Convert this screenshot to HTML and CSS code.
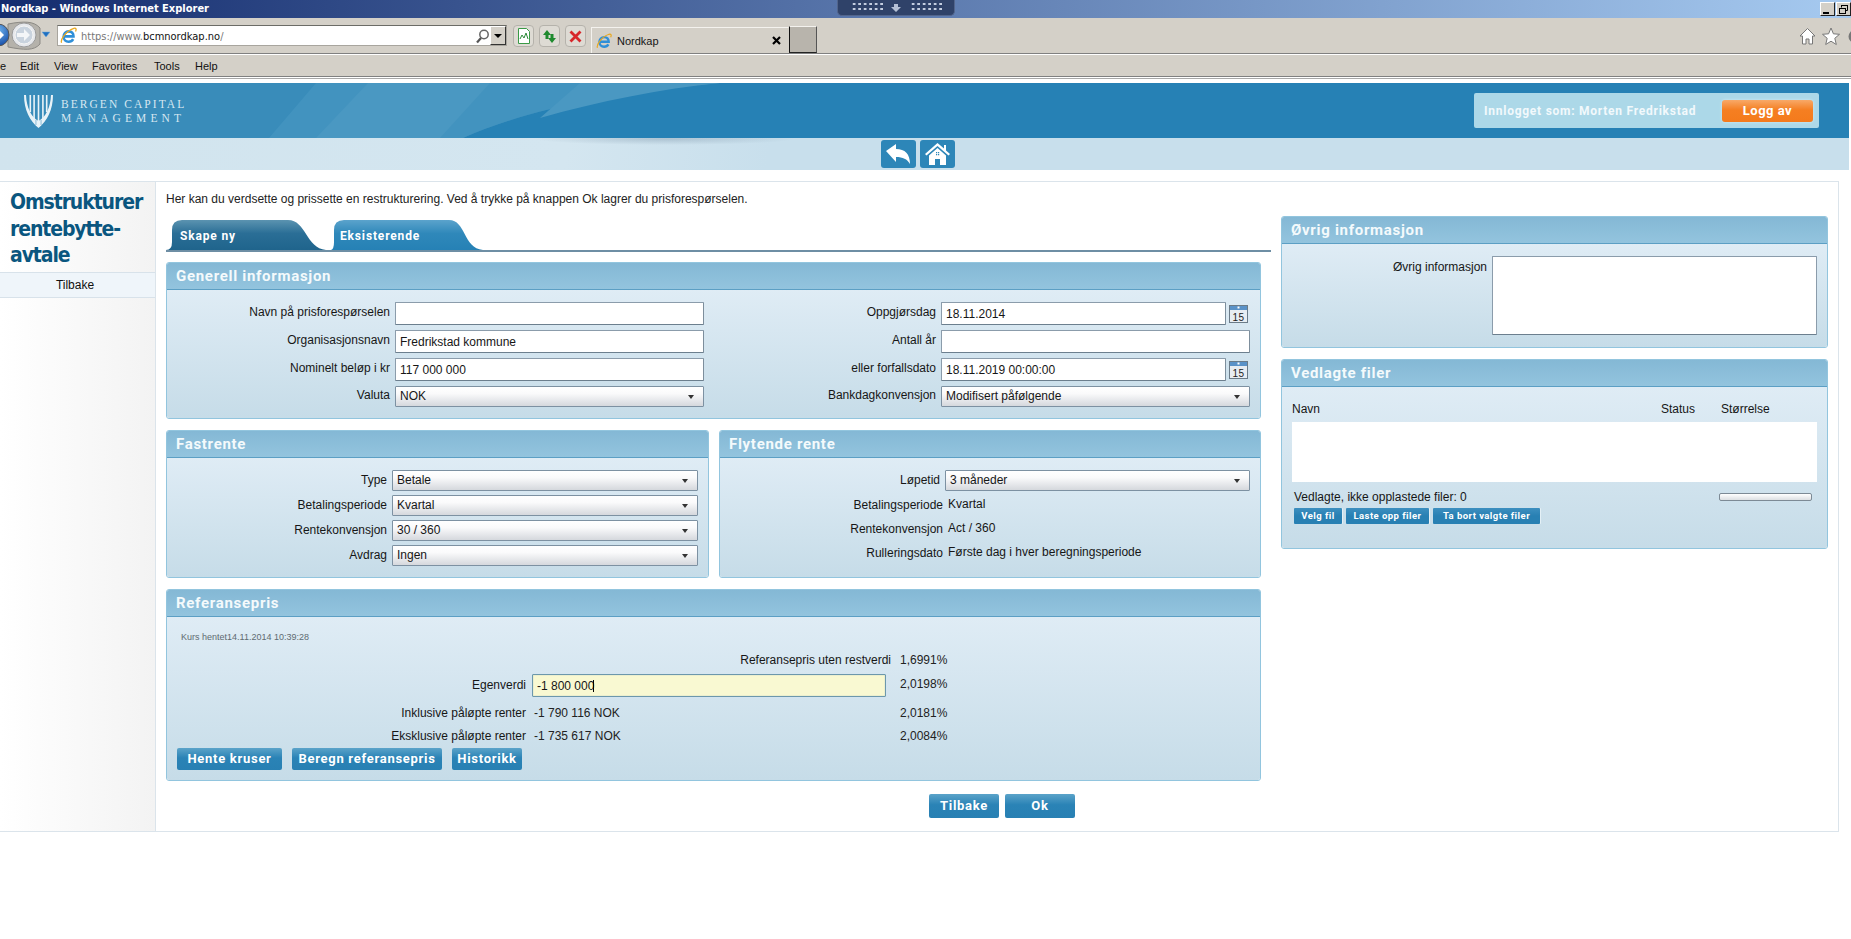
FILE: index.html
```html
<!DOCTYPE html>
<html lang="no">
<head>
<meta charset="utf-8">
<title>Nordkap</title>
<link rel="stylesheet" href="styles.css">
</head>
<body>
<svg class="defs" width="0" height="0">
  <symbol id="ie" viewBox="0 0 16 16">
    <path d="M3.400 8.800h9.300c0-2.800-1.800-4.700-4.400-4.700-2.900 0-4.900 2.200-4.900 5 0 2.800 2 4.700 4.700 4.700 2 0 3.500-.9 4.300-2.400" fill="none" stroke="#2f8fd8" stroke-width="2.400"/>
    <path d="M1.500 14.800C.2 12.500 5 4 13 1.300c2.200-.6 2.700.8 1.600 3" fill="none" stroke="#e8a820" stroke-width="1.200"/>
  </symbol>
  <symbol id="cal" viewBox="0 0 19 18">
    <rect x=".5" y=".5" width="18" height="17" fill="#e8edf2" stroke="#6b7b88"/>
    <rect x="1" y="1" width="17" height="4" fill="#5a92c8"/>
    <rect x="8.500" y="1.500" width="2" height="2" fill="#fff"/>
  </symbol>
</svg>

<div class="titlebar">
  <span class="title-text">Nordkap - Windows Internet Explorer</span>
  <div class="pulldown">
    <span class="dots"></span>
    <svg width="10" height="8" viewBox="0 0 10 8"><path d="M3 0h4v3h3L5 8 0 3h3z" fill="#b4c0d6"/></svg>
    <span class="dots"></span>
  </div>
  <div class="win-btns">
    <span class="win-btn"><svg width="13" height="13" viewBox="0 0 13 13"><rect x="2" y="9" width="6" height="2" fill="#000"/></svg></span>
    <span class="win-btn"><svg width="13" height="13" viewBox="0 0 13 13"><path d="M4.500 2.500h6v5h-2M4.500 2.500v2" fill="none" stroke="#000"/><path d="M4 2h7v1H4z"/><rect x="2.500" y="5.500" width="6" height="5" fill="none" stroke="#000"/><path d="M2 5h7v1H2z"/></svg></span>
  </div>
</div>

<div class="toolbar">
  <svg class="nav-arrows" width="57" height="35" viewBox="0 0 57 35">
    <defs>
      <radialGradient id="bk" cx=".5" cy=".3" r=".8"><stop offset="0" stop-color="#6fb4ee"/><stop offset="1" stop-color="#0b3f9e"/></radialGradient>
    </defs>
    <path d="M8 6C24 3 34 3 40 10v16C34 33 24 32 8 29z" fill="#b5b2ab" stroke="#8c8a85"/>
    <circle cx="-2" cy="17" r="11" fill="url(#bk)" stroke="#555"/>
    <path d="M-1 12l5 5-5 5v-3h-6v-4h6z" fill="#fff"/>
    <circle cx="24" cy="17" r="12" fill="#e6e8ec" stroke="#9a9a9a"/>
    <circle cx="24" cy="17" r="9" fill="#c9d3de" stroke="#f5f5f5"/>
    <path d="M24 11l6 6-6 6v-4h-7v-4h7z" fill="#f4f6f8"/>
    <path d="M42 14h8l-4 5z" fill="#1f6fc0" stroke="#6ba8df" stroke-width=".5"/>
  </svg>
  <div class="address">
    <svg class="addr-ie" width="17" height="17"><use href="#ie"/></svg>
    <span class="url"><span class="url-dim">https://www.</span>bcmnordkap.no<span class="url-dim">/</span></span>
    <svg class="addr-search" width="15" height="16" viewBox="0 0 15 16"><circle cx="9" cy="6.500" r="4.200" fill="#fff" stroke="#666" stroke-width="1.500"/><path d="M6 10l-4 4.500" stroke="#555" stroke-width="2.200"/></svg>
    <span class="addr-drop"></span>
  </div>
  <span class="tool-btn tool-first"><svg width="14" height="16" viewBox="0 0 14 16"><path d="M1.500.5h8l3 3v12h-11z" fill="#fff" stroke="#3a9a46"/><path d="M3 11l2-4 2 3 2-5 2 6" fill="none" stroke="#2b8a38"/></svg></span>
  <span class="tool-btn"><svg width="15" height="15" viewBox="0 0 15 15"><path d="M5 1L1 6h2.500v4h3V6H9z" fill="#1f8a2e"/><path d="M10 14l4-5h-2.500V5h-3v4H6z" fill="#1f8a2e"/></svg></span>
  <span class="tool-btn"><svg width="13" height="13" viewBox="0 0 13 13"><path d="M1.500 1.500l10 10M11.500 1.500l-10 10" stroke="#d8262a" stroke-width="2.800"/></svg></span>
  <div class="ie-tab">
    <svg width="16" height="16"><use href="#ie"/></svg>
    <span class="ie-tab-label">Nordkap</span>
    <svg class="ie-tab-x" width="9" height="9" viewBox="0 0 9 9"><path d="M1 1l7 7M8 1L1 8" stroke="#000" stroke-width="2.200"/></svg>
  </div>
  <span class="new-tab"></span>
  <div class="tool-right">
    <svg width="17" height="19" viewBox="0 0 17 19"><path d="M8.500 1.500L1 9h2.500v8h3.500v-5h3v5h3.500V9H16z" fill="#fff" stroke="#777"/></svg>
    <svg width="18" height="19" viewBox="0 0 18 19"><path d="M9 1l2.400 5.800 6.100.5-4.700 4 1.500 6.200L9 14.200l-5.300 3.300 1.500-6.200-4.700-4 6.100-.5z" fill="#fff" stroke="#777"/></svg>
    <svg width="17" height="19" viewBox="0 0 17 19"><circle cx="9" cy="9.500" r="5" fill="#fff" stroke="#777" stroke-width="3"/></svg>
  </div>
</div>

<nav class="menubar">
  <span class="m-file">e</span><span class="m-edit">Edit</span><span class="m-view">View</span><span class="m-fav">Favorites</span><span class="m-tools">Tools</span><span class="m-help">Help</span>
</nav>
<div class="chrome-end"></div>

<header class="site-header">
  <svg class="header-art" width="1849" height="55" viewBox="0 0 1849 55">
    <path d="M0 0H720C600 10 520 30 463 55H0z" fill="#398cba"/>
    <path d="M316 0H720C600 10 520 30 463 55H269z" fill="#4293bf"/>
    <path d="M368 0H490L440 55H316z" fill="#4a98c2"/>
    <path d="M580 0H720C660 6 600 18 540 35z" fill="#4a98c2"/>
  </svg>
  <div class="logo">
    <svg width="29" height="33" viewBox="0 0 29 33">
      <path d="M0 0H2C2.500 12 7 22 14.500 26 22 22 26.500 12 27 0h2C29 15 23 26 14.500 33 6 26 0 15 0 0z" fill="#e9f3f8"/>
      <path d="M5.500 0h1.600v17H5.500zM9.300 0h1.600v24H9.300zM13.700 0h1.600v32h-1.600zM18.100 0h1.600v24h-1.600zM21.900 0h1.600v17h-1.600z" fill="#e9f3f8"/>
      <path d="M11.500 25h.9v5h-.9zM16.600 25h.9v5h-.9z" fill="#7fb4d2"/>
    </svg>
    <div class="logo-text"><span class="logo-l1">BERGEN CAPITAL</span><span class="logo-l2">MANAGEMENT</span></div>
  </div>
  <div class="login-box">
    <span class="login-text">Innlogget som: Morten Fredrikstad</span>
    <button class="logout" type="button">Logg av</button>
  </div>
</header>

<div class="subbar">
  <span class="nav-btn"><svg width="27" height="22" viewBox="0 0 27 22"><path d="M1 8L11 1v5c9 0 14 5 14 15-3-5-7-7-14-7v5z" fill="#fff"/></svg></span>
  <span class="nav-btn"><svg width="27" height="24" viewBox="0 0 27 24"><path d="M13.500 1L1 12l1.500 1.500L13.500 4l11 9.500L26 12l-4-3.500V3h-2v3.500z" fill="#fff"/><path d="M5 13.500L13.500 6l8.500 7.500V23h-6v-6h-5v6H5z" fill="#fff"/><path d="M12 10h1.200v1.200H12zM14 10h1.200v1.200H14zM12 12h1.200v1.200H12zM14 12h1.200v1.200H14z" fill="#2d86b8"/></svg></span>
</div>

<main class="main">
  <aside class="side">
    <h1 class="side-title">Omstrukturer<br>rentebytte-<br>avtale</h1>
    <a class="side-link">Tilbake</a>
  </aside>
  <section class="content">
    <p class="intro">Her kan du verdsette og prissette en restrukturering. Ved å trykke på knappen Ok lagrer du prisforespørselen.</p>
    <div class="columns">
      <div class="col-left">
        <div class="tabs">
          <span class="tab tab-new">Skape ny</span>
          <span class="tab tab-existing">Eksisterende</span>
        </div>

        <div class="panel panel-general">
          <h2 class="panel-head">Generell informasjon</h2>
          <div class="panel-body general-body">
            <div class="form form-a">
              <div class="row"><label>Navn på prisforespørselen</label><input class="field w309" type="text"></div>
              <div class="row"><label>Organisasjonsnavn</label><input class="field w309" type="text" value="Fredrikstad kommune"></div>
              <div class="row"><label>Nominelt beløp i kr</label><input class="field w309" type="text" value="117 000 000"></div>
              <div class="row row-sel"><label>Valuta</label><div class="select w309">NOK</div></div>
            </div>
            <div class="form form-b">
              <div class="row"><label>Oppgjørsdag</label><input class="field w285" type="text" value="18.11.2014"><svg class="cal" width="19" height="18" viewBox="0 0 19 18"><use href="#cal"/><text x="9.500" y="15.500" class="cal-num">15</text></svg></div>
              <div class="row"><label>Antall år</label><input class="field w309" type="text"></div>
              <div class="row"><label>eller forfallsdato</label><input class="field w285" type="text" value="18.11.2019 00:00:00"><svg class="cal" width="19" height="18" viewBox="0 0 19 18"><use href="#cal"/><text x="9.500" y="15.500" class="cal-num">15</text></svg></div>
              <div class="row row-sel"><label>Bankdagkonvensjon</label><div class="select w309">Modifisert påfølgende</div></div>
            </div>
          </div>
        </div>

        <div class="panel-pair">
          <div class="panel panel-fixed">
            <h2 class="panel-head">Fastrente</h2>
            <div class="panel-body rate-body">
              <div class="row row-sel"><label>Type</label><div class="select w306">Betale</div></div>
              <div class="row row-sel"><label>Betalingsperiode</label><div class="select w306">Kvartal</div></div>
              <div class="row row-sel"><label>Rentekonvensjon</label><div class="select w306">30 / 360</div></div>
              <div class="row row-sel"><label>Avdrag</label><div class="select w306">Ingen</div></div>
            </div>
          </div>
          <div class="panel panel-float">
            <h2 class="panel-head">Flytende rente</h2>
            <div class="panel-body rate-body float-body">
              <div class="row row-sel"><label>Løpetid</label><div class="select w305">3 måneder</div></div>
              <div class="row row-val"><label>Betalingsperiode</label><span class="value">Kvartal</span></div>
              <div class="row row-val"><label>Rentekonvensjon</label><span class="value">Act / 360</span></div>
              <div class="row row-val"><label>Rulleringsdato</label><span class="value">Første dag i hver beregningsperiode</span></div>
            </div>
          </div>
        </div>

        <div class="panel panel-ref">
          <h2 class="panel-head">Referansepris</h2>
          <div class="panel-body ref-body">
            <div class="kurs">Kurs hentet14.11.2014 10:39:28</div>
            <div class="ref-row ref-first"><label class="ref-wide">Referansepris uten restverdi</label><span class="pct pct-first">1,6991%</span></div>
            <div class="ref-row ref-input"><label>Egenverdi</label><div class="ref-mid caret-wrap"><input class="field field-hl" type="text" value="-1 800 000"><span class="caret"></span></div><span class="pct pct-up">2,0198%</span></div>
            <div class="ref-row ref-third"><label>Inklusive påløpte renter</label><span class="ref-mid ref-val">-1 790 116 NOK</span><span class="pct">2,0181%</span></div>
            <div class="ref-row ref-fourth"><label>Eksklusive påløpte renter</label><span class="ref-mid ref-val">-1 735 617 NOK</span><span class="pct">2,0084%</span></div>
            <div class="ref-btns">
              <button class="btn btn-hente" type="button">Hente kruser</button>
              <button class="btn btn-beregn" type="button">Beregn referansepris</button>
              <button class="btn btn-hist" type="button">Historikk</button>
            </div>
          </div>
        </div>

        <div class="actions">
          <button class="btn btn-action" type="button">Tilbake</button>
          <button class="btn btn-action" type="button">Ok</button>
        </div>
      </div>

      <div class="col-right">
        <div class="panel panel-other">
          <h2 class="panel-head">Øvrig informasjon</h2>
          <div class="panel-body other-body">
            <label>Øvrig informasjon</label>
            <textarea class="area"></textarea>
          </div>
        </div>
        <div class="panel panel-files">
          <h2 class="panel-head">Vedlagte filer</h2>
          <div class="panel-body files-body">
            <div class="file-cols"><span>Navn</span><span>Status</span><span>Størrelse</span></div>
            <div class="file-list"></div>
            <div class="file-note"><span>Vedlagte, ikke opplastede filer: 0</span><span class="progress"></span></div>
            <div class="file-btns">
              <button class="mini mini-velg" type="button">Velg fil</button>
              <button class="mini mini-laste" type="button">Laste opp filer</button>
              <button class="mini mini-bort" type="button">Ta bort valgte filer</button>
            </div>
          </div>
        </div>
      </div>
    </div>
  </section>
</main>
</body>
</html>
```

FILE: styles.css
```css
* { box-sizing: border-box; }
html, body { margin: 0; padding: 0; }
body {
  width: 1851px;
  height: 939px;
  overflow: hidden;
  background: #fff;
  font-family: "Liberation Sans", Arial, sans-serif;
  font-size: 12px;
  color: #161616;
}
.defs { position: absolute; }

/* Browser chrome */
.titlebar {
  height: 18px;
  display: flex;
  align-items: flex-start;
  background: linear-gradient(90deg, #142c6e 0%, #a6caf0 100%);
  color: #fff;
}
.title-text { width: 837px; padding: 2px 0 0 1px; font: bold 11px/14px "DejaVu Sans", "Liberation Sans", sans-serif; font-stretch: condensed; white-space: nowrap; }
.pulldown {
  width: 118px; height: 16px;
  display: flex; align-items: center; justify-content: center; gap: 8px;
  background: #2f4269;
  border: 1px solid #52658c; border-top: 0;
  border-radius: 0 0 5px 5px;
}
.dots {
  width: 33px; height: 10px;
  background-image: conic-gradient(#c3cde0 25%, transparent 0);
  background-size: 5.500px 5px;
}
.win-btns { margin-left: auto; display: flex; gap: 1px; padding-top: 2px; }
.win-btn { width: 15px; height: 14px; background: #d4d0c8; border: 1px solid; border-color: #fff #222 #222 #fff; display: block; line-height: 0; }

.toolbar {
  height: 36px;
  display: flex;
  align-items: flex-start;
  background: #d4d0c8;
  border-bottom: 1px solid #808080;
}
.nav-arrows { flex: none; }
.address {
  width: 450px; height: 21px; margin-top: 7px;
  display: flex; align-items: center;
  background: #fff;
  border: 1px solid #a8a59e; border-top-color: #6b6b66;
}
.addr-ie { margin-left: 2px; }
.url { margin-left: 4px; padding-top: 2px; font: 11px/14px "DejaVu Sans", "Liberation Sans", sans-serif; font-stretch: condensed; color: #111; }
.url-dim { color: #777; }
.addr-search { margin-left: auto; }
.addr-drop {
  width: 16px; height: 19px; background: #d4d0c8; border: 1px solid; border-color: #fff #333 #333 #fff;
  display: flex; align-items: center; justify-content: center;
}
.addr-drop::after { content: ""; border: 4px solid transparent; border-top: 4px solid #000; border-bottom: 0; }
.tool-btn {
  width: 21px; height: 22px; margin: 7px 0 0 5px;
  display: flex; align-items: center; justify-content: center;
  background: #dedbd4; border: 1px solid #b5b2ab; border-radius: 4px;
}
.tool-first { margin-left: 6px; }
.ie-tab {
  width: 198px; height: 26px; margin: 9px 0 0 5px;
  display: flex; align-items: center;
  border: 1px solid #f4f2ee; border-bottom: 0; border-right-color: #d4d0c8;
  padding-left: 4px;
}
.ie-tab-label { margin-left: 5px; font: 11px/14px "Liberation Sans", sans-serif; }
.ie-tab-x { margin-left: auto; margin-right: 7px; }
.new-tab { width: 28px; height: 27px; margin: 8px 0 0 0; background: #b8b4ac; border: 1px solid; border-color: #f4f2ee #555 #222 #111; }
.tool-right { margin-left: auto; display: flex; gap: 6px; padding-top: 9px; width: 52px; flex: none; overflow: hidden; }
.tool-right svg { flex: none; }

.menubar {
  height: 22px;
  display: flex;
  align-items: center;
  border-top: 1px solid #fff;
  background: #d4d0c8;
  font: 11px/14px "Liberation Sans", sans-serif;
  color: #111;
}
.m-file { width: 20px; }
.m-edit { width: 34px; }
.m-view { width: 38px; }
.m-fav { width: 62px; }
.m-tools { width: 41px; }
.chrome-end { height: 7px; border-top: 1px solid #808080; box-shadow: inset 0 1px 0 #fff, inset 0 2px 0 #a8a8a8; }

/* Site header */
.site-header {
  position: relative;
  width: 1849px; height: 55px;
  background: #2681b5;
  display: flex; align-items: flex-start;
  justify-content: space-between;
}
.header-art { position: absolute; left: 0; top: 0; }
.logo { position: relative; display: flex; margin: 12px 0 0 24px; gap: 8px; }
.logo-text { display: flex; flex-direction: column; padding-top: 2px; font-family: "Liberation Serif", serif; color: #d6e7f1; font-size: 11.500px; line-height: 14px; white-space: nowrap; }
.logo-l1 { letter-spacing: 2.050px; }
.logo-l2 { letter-spacing: 4.100px; }
.login-box {
  position: relative;
  width: 345px; height: 35px; margin: 10px 30px 0 0;
  display: flex; align-items: center; justify-content: space-between;
  padding: 0 6px 0 10px;
  background: #acd8e8; border-radius: 2px;
}
.login-text { font: bold 12px/14px Roboto, sans-serif; letter-spacing: .75px; color: #f2f9fc; white-space: nowrap; }
.logout {
  width: 91px; height: 22px;
  border: 0; border-radius: 3px; padding: 0;
  background: linear-gradient(180deg, #f8a968 0%, #f57f22 45%, #f47a1c 100%);
  box-shadow: 0 0 3px #d3ecf4;
  color: #fff; font: bold 13px/22px Roboto, sans-serif; letter-spacing: .5px;
}
.subbar {
  width: 1849px; height: 32px;
  display: flex; gap: 4px;
  padding: 2px 0 0 881px;
  background:
    radial-gradient(ellipse 130px 6px at 665px 1px, rgba(120,145,165,.38), rgba(120,145,165,0)),
    linear-gradient(100deg, #d1e4ee 0, #d4e6f0 560px, #c8dfec 760px);
}
.nav-btn {
  width: 35px; height: 28px;
  display: flex; align-items: center; justify-content: center;
  background: #2d86b8; border-radius: 3px;
}

/* Main layout */
.main {
  width: 1839px;
  margin-top: 11px;
  display: flex;
  border-top: 1px solid #dbe4eb;
  border-right: 1px solid #dbe4eb;
  border-bottom: 1px solid #dbe4eb;
}
.side {
  width: 156px; flex: none;
  background: linear-gradient(90deg, #fff 0, #f3f3f3 100%);
  border-right: 1px solid #dbe4eb;
}
.side-title {
  margin: 0; padding: 7px 0 0 10px; height: 90px;
  font: 700 21px/26.500px "DejaVu Sans", sans-serif;
  font-stretch: condensed;
  letter-spacing: -1.100px;
  color: #0a567f;
  white-space: nowrap;
}
.side-link {
  display: block; height: 26px;
  padding-right: 5px;
  text-align: center; font-size: 12px; line-height: 25px; color: #111;
  background: #eff5fa;
  border-top: 1px solid #d8e2ea; border-bottom: 1px solid #d8e2ea;
}
.content { flex: 1; padding-left: 10px; min-width: 0; }
.intro { margin: 10px 0 0; height: 14px; line-height: 14px; color: #222; }
.columns { margin-top: 10px; display: flex; gap: 10px; }
.col-left { width: 1105px; flex: none; }
.col-right { width: 547px; flex: none; }

.tabs {
  margin-top: 4px; height: 32px;
  display: flex; align-items: flex-end;
  border-bottom: 2px solid #6e8ea4;
}
.tab {
  height: 30px;
  color: #fff; font: bold 12px/32px Roboto, sans-serif; letter-spacing: .85px;
}
.tab-new {
  width: 160px; padding-left: 14px;
  background: linear-gradient(180deg, #5b93b0 0, #2a6e96 45%, #1f648c 100%);
  clip-path: path("M0 30Q6 30 6 22V10Q6 0 16 0H122C140 0 140 28 160 30Z");
}
.tab-existing {
  width: 152px; margin-left: 5px; padding-left: 9px;
  background: linear-gradient(180deg, #5ba3cc 0, #2f88ba 45%, #2681b5 100%);
  clip-path: path("M0 30Q3 29 3 22V10Q3 0 13 0H118C135 0 132 28 152 30Z");
}

/* Panels */
.panel { width: 1095px; border: 1px solid #92c5de; border-radius: 3px; overflow: hidden; }
.panel-head {
  margin: 0; height: 27px; padding-left: 9px;
  font: bold 15px/27px Roboto, sans-serif; letter-spacing: .7px; color: #f4fafc;
  background: linear-gradient(180deg, #84b8d5 0, #93c4de 100%);
  border-bottom: 1px solid #5c9fc4;
}
.panel-body { background: linear-gradient(180deg, #dfecf5 0, #c6dce8 100%); }
.panel-general { margin-top: 10px; }
.general-body { display: flex; padding: 12px 0 11px; }
.form-a { width: 537px; }
.form-b { width: 546px; }
.form-a label { padding-right: 4px; }

.row { display: flex; align-items: flex-start; height: 23px; margin-bottom: 5px; }
.row label { flex: 1; text-align: right; padding-right: 5px; line-height: 20px; min-width: 0; white-space: nowrap; }
.row-sel { height: 21px; margin-bottom: 4px; }
.row-sel:last-child { margin-bottom: 0; }
.general-body .row-sel { margin-bottom: 0; }
.general-body .row-sel label { line-height: 19px; }
.rate-body .row label { line-height: 21px; }

.field {
  height: 23px; padding: 0 4px; margin: 0;
  font: 12px/20px "Liberation Sans", sans-serif; color: #161616;
  background: #fff;
  border: 1px solid #8b9cab; border-bottom-color: #6c7f8e; border-right-color: #7d8e9c;
  border-radius: 1px;
  outline: 0;
}
.w285 { width: 285px; flex: none; }
.w305 { width: 305px; flex: none; }
.w306 { width: 306px; flex: none; }
.w309 { width: 309px; flex: none; }
.cal { flex: none; margin: 3px 2px 0 3px; }
.cal-num { font: 10px "Liberation Sans", sans-serif; fill: #222; text-anchor: middle; letter-spacing: .5px; }

.select {
  position: relative;
  height: 21px; padding: 0 4px;
  font: 12px/19px "Liberation Sans", sans-serif; color: #161616;
  background: linear-gradient(180deg, #fff 0, #fafafb 35%, #d5d8dd 100%);
  border: 1px solid #7d91a2;
  border-radius: 1px;
}
.select::after {
  content: ""; position: absolute; right: 9px; top: 8px;
  border-left: 3.500px solid transparent; border-right: 3.500px solid transparent; border-top: 4px solid #333;
}

.panel-pair { display: flex; gap: 10px; margin-top: 11px; width: 1095px; }
.panel-fixed { width: 543px; flex: none; }
.panel-float { width: 542px; flex: none; }
.panel-pair .panel { display: flex; flex-direction: column; }
.rate-body { flex: 1; padding: 12px 10px 11px 0; }
.float-body { padding-right: 10px; }
.float-body .row-val { height: 21px; margin-bottom: 3px; }
.float-body .row-val:last-child { margin-bottom: 0; }
.value { width: 302px; flex: none; line-height: 19px; }

.panel-ref { margin-top: 11px; }
.ref-body { padding: 14px 0 10px 10px; height: 163px; }
.kurs { height: 12px; padding-left: 4px; font-size: 9px; line-height: 12px; color: #606a72; }
.ref-row { display: flex; align-items: center; margin-left: -10px; height: 14px; line-height: 14px; }
.ref-row label { width: 359px; text-align: right; flex: none; }
.ref-row .ref-wide { width: 724px; }
.ref-first { margin-top: 10px; }
.ref-input { margin-top: 7px; height: 23px; }
.ref-third, .ref-fourth { margin-top: 9px; }
.ref-mid { width: 354px; margin-left: 6px; flex: none; }
.ref-val { padding-left: 2px; color: #222; }
.pct { margin-left: 14px; color: #222; }
.pct-first { margin-left: 9px; }
.pct-up { padding-bottom: 3px; }
.ref-input label { padding-bottom: 1px; }
.caret-wrap { position: relative; height: 23px; }
.field-hl { width: 354px; background: #f9f9d2; border: 1px solid #6c98ac; box-shadow: inset 0 0 1px #7a9cae; }
.caret { position: absolute; left: 61px; top: 6px; width: 1px; height: 12px; background: #000; }

.btn {
  border: 0; border-radius: 2px; padding: 0;
  color: #fff; font: bold 13px/22px Roboto, sans-serif; letter-spacing: .72px;
  background: linear-gradient(180deg, #5ba3c9 0, #2a83b6 45%, #2880b3 100%);
}
.ref-btns { display: flex; gap: 10px; margin-top: 5px; }
.ref-btns .btn { height: 22px; }
.btn-hente { width: 105px; }
.btn-beregn { width: 150px; }
.btn-hist { width: 70px; }
.actions { display: flex; gap: 6px; margin: 13px 0 13px 763px; }
.btn-action { width: 70px; height: 24px; font-size: 13px; line-height: 24px; }

.col-right .panel { width: 547px; }
.other-body { display: flex; align-items: flex-start; padding: 12px 0 11px 0; height: 103px; }
.other-body label { width: 205px; flex: none; text-align: right; padding-top: 4px; line-height: 14px; }
.area { width: 325px; height: 79px; margin: 0 0 0 5px; resize: none; background: #fff; border: 1px solid #8b9cab; border-bottom-color: #6c7f8e; border-radius: 1px; outline: 0; }
.panel-files { margin-top: 11px; }
.files-body { padding: 15px 10px 23px; height: 161px; }
.file-cols { display: grid; grid-template-columns: 369px 60px 1fr; height: 14px; line-height: 14px; }
.file-list { height: 60px; margin-top: 6px; background: #fff; }
.file-note { display: flex; justify-content: space-between; align-items: center; height: 14px; margin-top: 8px; padding: 0 5px 0 2px; line-height: 14px; }
.progress { width: 93px; height: 8px; border: 1px solid #7d8a95; border-radius: 2px; background: linear-gradient(180deg, #fff, #dcdfe2); }
.file-btns { display: flex; gap: 4px; margin: 4px 0 0 2px; }
.mini {
  height: 16px; border: 0; padding: 0; border-radius: 1px;
  color: #fff; font: bold 9.500px/16px Roboto, sans-serif; letter-spacing: .45px;
  background: linear-gradient(180deg, #3d8fbf 0, #2880b3 50%, #2880b3 100%);
  box-shadow: 1px 0 0 #e4f0f6;
}
.mini-velg { width: 48px; }
.mini-laste { width: 83px; }
.mini-bort { width: 107px; }
```
